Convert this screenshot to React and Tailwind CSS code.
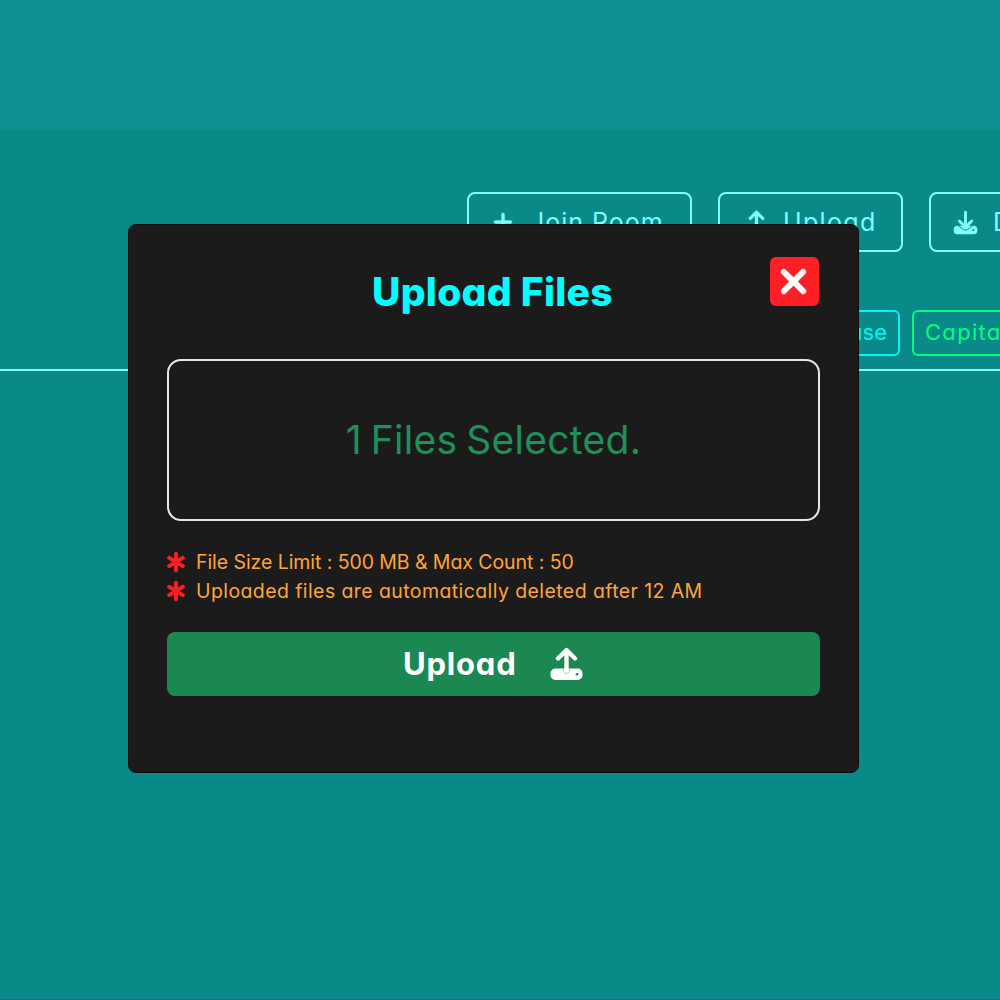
import { FaPlus, FaXmark, FaAsterisk } from "react-icons/fa6";

function TrayIcon({ down = false, className }) {
  return (
    <svg viewBox="0 0 33 34" className={className} fill="none" strokeLinecap="round" strokeLinejoin="round">
      <rect x="0.5" y="21.5" width="32" height="11.5" rx="4.8" fill="currentColor" />
      <circle cx="27" cy="27.2" r="1.3" className="fill-[#0c7f70]" />
      {down ? (
        <path d="M16.5 3V22M8 15L16.5 23L25 15" stroke="currentColor" strokeWidth="4" />
      ) : (
        <path d="M16.5 24V4M8 11.5L16.5 3L25 11.5" stroke="currentColor" strokeWidth="4.4" />
      )}
      {down ? (
        <path d="M5.5 20.2L13.5 26.6Q16.5 28.4 19.5 26.6L27.5 20.2" className="stroke-[#0a8989]" strokeWidth="1.2" />
      ) : (
        <path d="M13.4 21.5V24.5Q16.5 28.6 19.6 24.5V21.5" className="stroke-[#8cc7ac]" strokeWidth="0.8" />
      )}
    </svg>
  );
}

function ToolButton({ icon, label, className, labelClass }) {
  return (
    <button className={`flex h-[60px] shrink-0 items-center rounded-lg border-2 border-[#7ffcfc] text-[#7ffcfc] ${className}`}>
      {icon}
      <span className={`whitespace-nowrap text-[25px] leading-none ${labelClass}`}>{label}</span>
    </button>
  );
}

function Note({ children, className }) {
  return (
    <li className="flex h-[29px] items-center gap-[9px]">
      <FaAsterisk className="-ml-[2px] size-[22px] shrink-0 stroke-[#ff1f27] stroke-[26px] text-[#ff1f27]" />
      <span className={`mt-[2px] whitespace-nowrap text-[19.5px] leading-none text-[#ffa538] ${className}`}>{children}</span>
    </li>
  );
}

function UploadDialog() {
  return (
    <section className="absolute left-[128px] top-[224px] flex h-[549px] w-[731px] flex-col rounded-lg border border-[#110a0a] bg-[#1b1b1b] px-[38px] pt-[31px]">
      <header className="flex h-[50px] items-start">
        <h2 className="ml-[205px] mt-[16px] w-[245px] whitespace-nowrap text-[39px] font-extrabold leading-none tracking-[0.3px] text-[#00ffff]">
          Upload Files
        </h2>
        <button className="ml-auto mr-px mt-px flex size-[49px] items-center justify-center rounded-md bg-[#ff1f27] text-white">
          <FaXmark className="mr-[3px] size-[39px] stroke-white stroke-[14px]" />
        </button>
      </header>
      <div className="mt-[53px] flex h-[162px] shrink-0 items-center justify-center rounded-[14px] border-2 border-[#e6e6e6]">
        <p className="-mt-px whitespace-nowrap text-[39px] leading-none tracking-[0.3px] text-[#1d9158] [word-spacing:-2.5px]">
          1 Files Selected.
        </p>
      </div>
      <ul className="mt-[26px]">
        <Note className="tracking-[-0.07px]">File Size Limit : 500 MB &amp; Max Count : 50</Note>
        <Note className="tracking-[0.41px]">Uploaded files are automatically deleted after 12 AM</Note>
      </ul>
      <button className="mt-[27px] flex h-[64px] shrink-0 items-center rounded-lg bg-[#1b8854] pl-[236px] text-white">
        <span className="-mt-[2px] w-[147px] text-left text-[31px] font-bold leading-none tracking-[0.8px]">Upload</span>
        <TrayIcon className="-mt-px h-[34px] w-[33px]" />
      </button>
    </section>
  );
}

export default function App() {
  return (
    <main className="relative flex h-[1000px] w-[1000px] flex-col overflow-hidden border-b border-[#0b7880] bg-[#0a8989] font-['Inter',sans-serif] [font-feature-settings:'cv11']">
      <div className="h-[132px] shrink-0 border-b border-[#098586] bg-[#0e8e8f]" />
      <nav className="mt-[60px] flex gap-[26px] pl-[467px]">
        <ToolButton icon={<FaPlus className="size-[22px] stroke-current stroke-[16px]" />} label="Join Room" className="w-[225px] pl-[23px]" labelClass="ml-[16px] tracking-[1px]" />
        <ToolButton icon={<TrayIcon className="size-[25px]" />} label="Upload" className="w-[185px] pl-[24px]" labelClass="ml-[14px] tracking-[1.35px]" />
        <ToolButton icon={<TrayIcon down className="size-[25px]" />} label="Download" className="w-[225px] pl-[22px]" labelClass="ml-[15px]" />
      </nav>
      <div className="mt-[58px] flex h-[61px] shrink-0 items-start gap-[12px] border-b-2 border-[#7ffcfc] pl-[744px] text-[22px] leading-none">
        <span className="flex h-[46px] w-[156px] shrink-0 items-center justify-end rounded-md border-2 border-[#00f6f6] pb-[2px] pr-[11px] text-[#00f6f6]">Lowercase</span>
        <span className="flex h-[46px] w-[150px] shrink-0 items-center rounded-md border-2 border-[#00ff80] pb-[2px] pl-[11px] tracking-[1.3px] text-[#00ff80]">Capitalize</span>
      </div>
      <UploadDialog />
    </main>
  );
}
